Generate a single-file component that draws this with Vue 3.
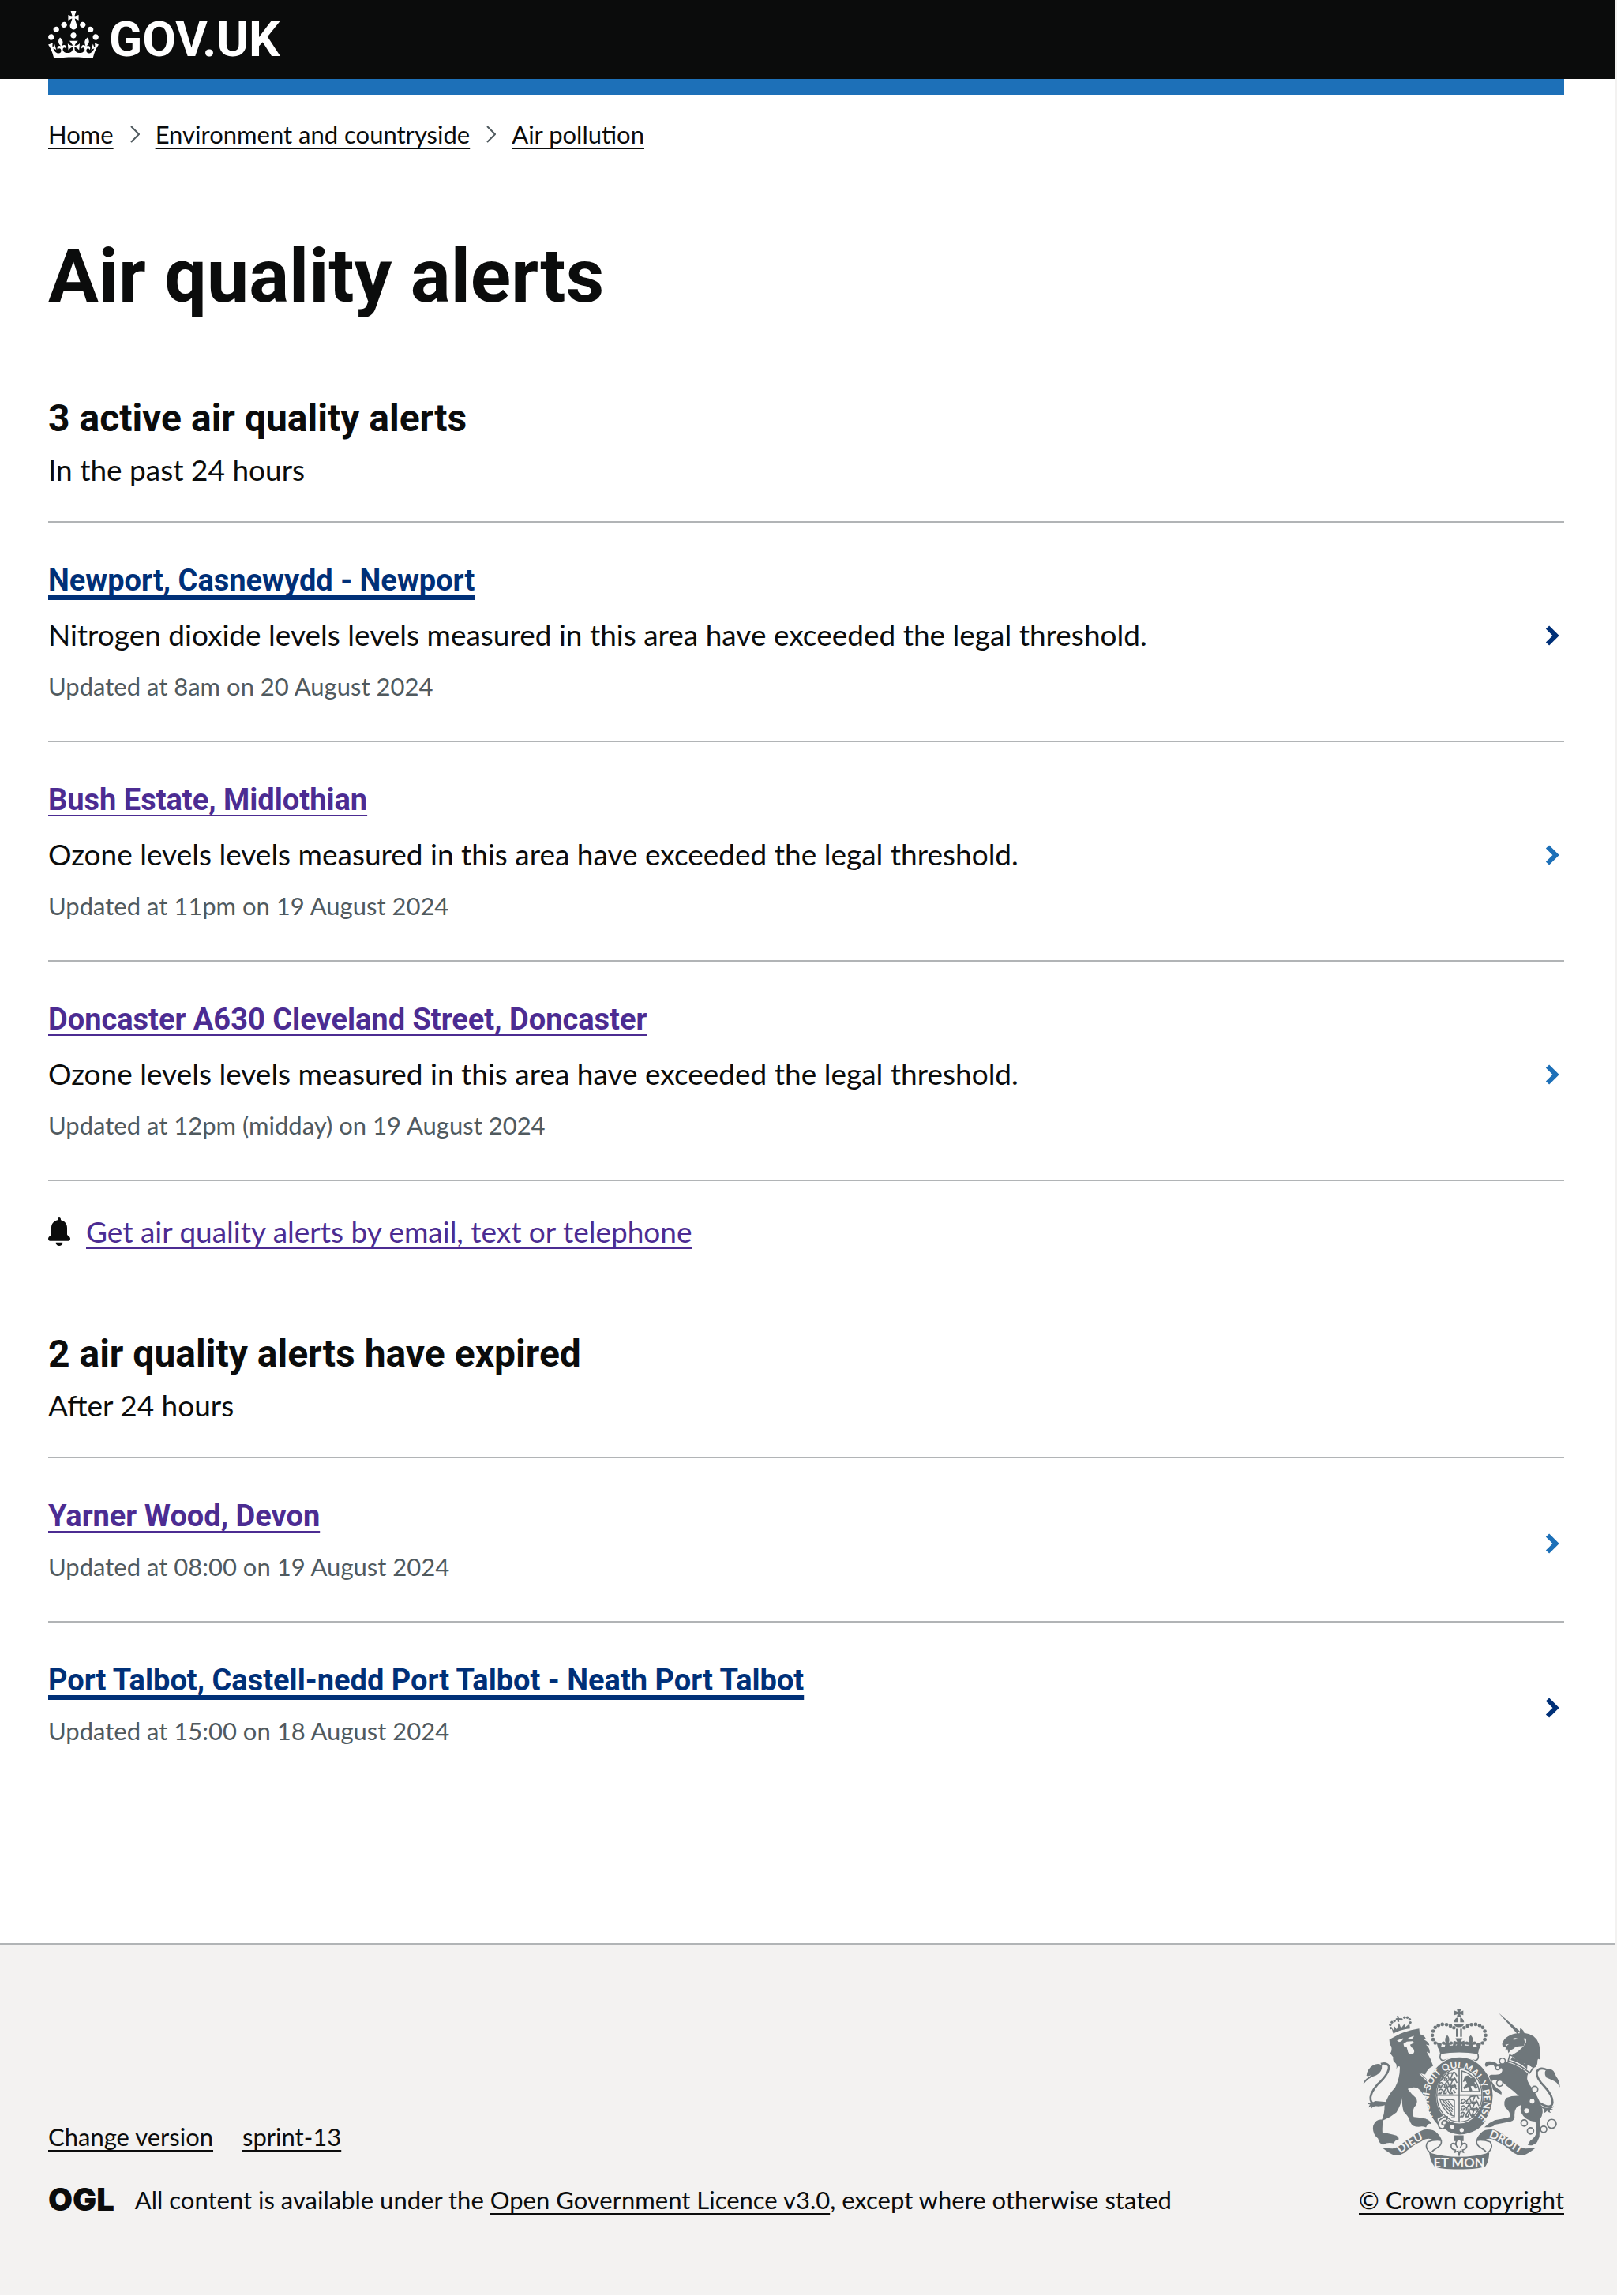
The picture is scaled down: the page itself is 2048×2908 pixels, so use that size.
<script setup>
const breadcrumbs = ['Home', 'Environment and countryside', 'Air pollution']

const groups = [
  {
    id: 'active',
    heading: '3 active air quality alerts',
    caption: 'In the past 24 hours',
    alerts: [
      {
        place: 'Newport, Casnewydd - Newport',
        detail: 'Nitrogen dioxide levels levels measured in this area have exceeded the legal threshold.',
        updated: 'Updated at 8am on 20 August 2024',
        highlighted: true,
      },
      {
        place: 'Bush Estate, Midlothian',
        detail: 'Ozone levels levels measured in this area have exceeded the legal threshold.',
        updated: 'Updated at 11pm on 19 August 2024',
      },
      {
        place: 'Doncaster A630 Cleveland Street, Doncaster',
        detail: 'Ozone levels levels measured in this area have exceeded the legal threshold.',
        updated: 'Updated at 12pm (midday) on 19 August 2024',
      },
    ],
    signup: 'Get air quality alerts by email, text or telephone',
  },
  {
    id: 'expired',
    heading: '2 air quality alerts have expired',
    caption: 'After 24 hours',
    alerts: [
      { place: 'Yarner Wood, Devon', updated: 'Updated at 08:00 on 19 August 2024' },
      {
        place: 'Port Talbot, Castell-nedd Port Talbot - Neath Port Talbot',
        updated: 'Updated at 15:00 on 18 August 2024',
        highlighted: true,
      },
    ],
  },
]

// Left half of the crown's pearls; the right half mirrors them.
const pearls = [[353, 203], [345, 190], [342, 174], [345, 158], [353, 144], [365, 136], [380, 132], [396, 133], [411, 138], [424, 145]]
const rings = [[609, 272, 11], [591, 297, 8], [599, 356, 12], [732, 380, 12], [692, 508, 12], [716, 538, 12], [766, 532, 12], [797, 511, 17]]
const lionCrownPearls = [[184, 146], [182, 134], [188, 124], [198, 119], [224, 113], [236, 106], [247, 106], [256, 113], [258, 125]]
const passantRows = [
  [368, 330], [368, 355], [366, 380], [452, 418], [452, 443], [450, 468],
]
</script>

<template>
  <div class="page">
    <header class="header">
      <div class="container">
        <a class="brand" href="#" aria-label="GOV.UK">
          <svg class="brand-crown" viewBox="0 0 32 30" fill="currentColor" aria-hidden="true">
            <path d="M22.6 10.4c-1 .4-2-.1-2.4-1-.4-.9.1-2 1-2.4.9-.4 2 .1 2.4 1s-.1 2-1 2.4m-5.9 6.7c-.9.4-2-.1-2.4-1-.4-.9.1-2 1-2.4.9-.4 2 .1 2.4 1s-.1 2-1 2.4m10.8-3.7c-1 .4-2-.1-2.4-1-.4-.9.1-2 1-2.4.9-.4 2 .1 2.4 1s0 2-1 2.4m3.3 4.8c-1 .4-2-.1-2.4-1-.4-.9.1-2 1-2.4.9-.4 2 .1 2.4 1s-.1 2-1 2.4M17 4.7l2.3 1.2V2.5l-2.3.7-.2-.2.9-3h-3.4l.9 3-.2.2c-.1.1-2.3-.7-2.3-.7v3.4L15 4.7c.1.1.1.2.2.2l-1.3 4c-.1.2-.1.4-.1.6 0 1.1.8 2 1.9 2.2h.7c1-.2 1.9-1.1 1.9-2.1 0-.2 0-.4-.1-.6l-1.3-4c-.1-.2 0-.2.1-.3m-7.6 5.7c.9.4 2-.1 2.4-1 .4-.9-.1-2-1-2.4-.9-.4-2 .1-2.4 1s0 2 1 2.4m-5 3c.9.4 2-.1 2.4-1 .4-.9-.1-2-1-2.4-.9-.4-2 .1-2.4 1s.1 2 1 2.4m-3.2 4.8c.9.4 2-.1 2.4-1 .4-.9-.1-2-1-2.4-.9-.4-2 .1-2.4 1s0 2 1 2.4m14.8 11c4.4 0 8.6.3 12.3.8 1.1-4.5 2.4-7 3.7-8.8l-2.5-.9c.2 1.3.3 1.9 0 2.7-.4-.4-.8-1.1-1.1-2.3l-1.2 4c.7-.5 1.3-.8 2-.9-1.1 2.5-2.6 3.1-3.5 3-1.1-.2-1.7-1.2-1.5-2.1.3-1.2 1.5-1.5 2.1-.1 1.1-2.3-.8-3-2-2.3 1.9-1.9 2.1-3.5.6-5.6-2.1 1.6-2.1 3.2-1.2 5.5-1.2-1.4-3.2-.6-2.5 1.6.9-1.4 2.1-.5 1.9.8-.2 1.1-1.7 2.1-3.5 1.9-2.7-.2-2.9-2.1-2.9-3.6.7-.1 1.9.5 2.9 1.9l.4-4.3c-1.1 1.1-2.1 1.4-3.2 1.4.4-1.2 2.1-3 2.1-3h-5.4s1.7 1.9 2.1 3c-1.1 0-2.1-.2-3.2-1.4l.4 4.3c1-1.4 2.2-2 2.9-1.9-.1 1.5-.2 3.4-2.9 3.6-1.9.2-3.4-.8-3.5-1.9-.2-1.3 1-2.2 1.9-.8.7-2.3-1.2-3-2.5-1.6.9-2.2.9-3.9-1.2-5.5-1.5 2-1.3 3.7.6 5.6-1.2-.7-3.1 0-2 2.3.6-1.4 1.8-1.1 2.1.1.2.9-.3 1.9-1.5 2.1-.9.2-2.4-.5-3.5-3 .6 0 1.2.3 2 .9l-1.2-4c-.3 1.1-.7 1.9-1.1 2.3-.3-.8-.2-1.4 0-2.7l-2.9.9C1.3 23 2.6 25.5 3.7 30c3.7-.5 7.9-.8 12.3-.8" />
          </svg>
          <span class="brand-name">GOV.UK</span>
        </a>
      </div>
    </header>

    <div class="container content">
      <div class="service-bar"></div>

      <nav aria-label="Breadcrumb">
        <ol class="breadcrumbs">
          <li v-for="(crumb, i) in breadcrumbs" :key="crumb">
            <svg v-if="i > 0" class="crumb-arrow" viewBox="0 0 12 22" aria-hidden="true">
              <path d="M1 1l10 10L1 21" />
            </svg>
            <a href="#">{{ crumb }}</a>
          </li>
        </ol>
      </nav>

      <main>
        <h1>Air quality alerts</h1>

        <section v-for="group in groups" :key="group.id" :aria-labelledby="group.id">
          <h2 :id="group.id">{{ group.heading }}</h2>
          <p class="caption">{{ group.caption }}</p>

          <ul class="alerts">
            <li v-for="alert in group.alerts" :key="alert.place" :class="{ highlighted: alert.highlighted }">
              <div class="alert-text">
                <h3><a href="#">{{ alert.place }}</a></h3>
                <p v-if="alert.detail" class="detail">{{ alert.detail }}</p>
                <p class="updated">{{ alert.updated }}</p>
              </div>
              <svg class="alert-arrow" viewBox="0 0 18 28" aria-hidden="true">
                <path d="M3 3.500L13.500 14L3 24.500" />
              </svg>
            </li>
          </ul>

          <p v-if="group.signup" class="signup">
            <svg class="bell" viewBox="33 45 84 108" fill="currentColor" aria-hidden="true">
              <path d="M75 45c4 0 6 3 6 7v3c15 3 24 14 24 30v24c0 6 12 8 12 17 0 5-3 8-7 8H40c-4 0-7-3-7-8 0-9 12-11 12-17V85c0-16 9-27 24-30v-3c0-4 2-7 6-7z" />
              <path d="M62 140h26c-1 8-6 13-13 13s-12-5-13-13z" />
            </svg>
            <a href="#">{{ group.signup }}</a>
          </p>
        </section>
      </main>
    </div>

    <footer class="footer">
      <div class="container footer-inner">
        <div class="footer-meta">
          <ul class="footer-links">
            <li><a href="#">Change version</a></li>
            <li><a href="#">sprint-13</a></li>
          </ul>
          <div class="licence">
            <span class="ogl">OGL</span>
            <p>All content is available under the <a href="#">Open Government Licence v3.0</a>, except where otherwise stated</p>
          </div>
        </div>

        <a class="copyright" href="#">
          <svg class="crest" viewBox="77 70 752 615" aria-hidden="true">
            <defs>
              <path id="garter-text" d="M352 496A104 121 0 1 1 525 478L500 505" />
              <path id="scroll-left" d="M221 625Q275 580 326 563" />
              <path id="scroll-right" d="M556 562Q610 582 676 626" />
            </defs>

            <!-- crown -->
            <path class="ink" d="M435 72h17l-4 12 12-4v17l-12-4 4 12h-17l3-12-12 4V80l12 4zM424 124q3-17 15-18v18zM448 106q12 2 15 18h-15zM424 129h39q-4 14-20 14t-19-14zM432 149h7v31h-7zM448 149h7v31h-7z" />
            <g v-for="side in 2" :key="side" :transform="side === 2 ? 'matrix(-1 0 0 1 887 0)' : undefined">
              <circle v-for="p in pearls" :key="p.join()" class="ink" :cx="p[0]" :cy="p[1]" r="7" />
              <path class="ink" d="M399 173q12 13 5 29 10-9 16-1 2 9-8 9h-5l4 14h-23l3-14h-4q-11 0-9-9 6-8 15 1-7-16 6-29z" />
              <path class="ink" d="M358 199l20 7-4 17-10 1zM422 198l9 7v18l-12 2z" />
              <path class="ink" d="M152 603l38 2q16-1 40-21 50-40 80-51 36-3 50 13 16 16 17 28-20-5-33-1-17-12-44 5-30 12-65 44-20 13-40 8-15-5-43-27z" />
              <path class="line" d="M376 574q-26-4-51 6-12 16 0 32 8 10 14 15M376 574q3 18-17 29-14 8-19 16" />
            </g>
            <path class="ink" d="M430 185h27l-7 14 14-5v18l-13-4 7 16h-29l7-16-13 4v-18l14 5zM366 220q78-18 155 0l-5 25q-72-12-144 0z" />
            <path class="line" d="M373 246q-6 22 10 24 60-18 122 0 16-2 11-24" />

            <!-- lion -->
            <circle v-for="p in lionCrownPearls" :key="p.join()" class="ink" :cx="p[0]" :cy="p[1]" r="5" />
            <path class="ink" d="M206 100l7 1 2 7 7 1v6l-7 1 1 7-7-1-1-6-6-1 1-6 6-1zM186 144l8 10 4-14 8 11 9-24 8 20 12-16 4 12 16-13 2 18q-35 3-64 19z" />
            <path class="ink" d="M178 190l22-12q36-22 92-30l2 22q16 2 24 18l-8 2q18 8 21 22l-14-3q18 15 15 33l-12-6q15 24 25 54-24 12-30 33l-18-4q34 30 50 56l6 35q-2 22-13 15l-4-11-6 13-7-16-7 6q2-12-9-17-7-16-21-25-18-6-38 3 16 22 32 35 10 18-8 37-8 20-1 35 30 3 47 7 18 8 20 20-13-5-20 13-13-6-28-2-24 0-32-18-8-26-26-41-8-34-4-54-6 30-23 58-24 20-50 30-5 22-3 47 33 3 53 11 13 9 7 17-12-2-17 13-24-6-41 5-14-3-19-24-24-20-18-50 12-26 33-22 10-22 10-52 10-40 40-70 20-40 18-80-8-5-13 9 3-19-5-24-10-5-7-20l-11-15q8-15 3-28l-5-6z" />
            <path class="paper" d="M207 193l24-8q-3 13-16 14zM249 184l23-8q-3 12-15 13zM232 206l13-8 21-2 7 6-16 8 6 10q10 4 10 16-2 10-12 10-12-2-13-14l-4-14-10-2z" />
            <path class="paper-line" d="M294 320q30 28 54 56" />
            <path class="line tail" d="M165 435q-50 15-58-14-5-25 26-60 48-44 43-71-10-14-30-7" />
            <path class="ink" d="M78 362q4-20 20-27l12-10q-10 6-19 3 2-26 25-40 20-10 34 0 2 26-22 38-30 8-50 36zM93 430q18 4 32-6l42 4q-16 14-42 15-13 4-18 13-1-7 4-13-9 1-12 7 1-7 6-12-7 0-12-8z" />

            <!-- unicorn -->
            <path class="ink" d="M594 88l81 70-10 10zM608 207q3-18 22-29 20-13 44-12l3-20q14 8 15 19 42 5 56 40 8 30 3 61-9-8-9 14-2 16-14 18l-14-8q-36-16-54-22l-15-18q26-14 46-36-22 0-36 7-4 6-15 9l-8 12-4-16-8 6 2-12-12-3z" />
            <path class="paper" d="M646 188q12-6 20-2-8 8-20 2zM620 210l14-3-10 8zM690 186q8 14 0 28 14-12 8-28z" />
            <path class="line" d="M637 249q44 14 90 47l-14 21q-40-34-82-46z" />
            <path class="ink" d="M640 268l8-14 6 11 8-8 4 14 8-9 5 15 10-9 4 15 12-7-2 26q-30-26-63-34z" />
            <path class="ink" d="M625 275q50 14 82 45-10 16 5 42 34 46 43 78 16 26-3 55l-2 66-9 20q-20 18-36 10l10-16q24-15 23-35l-3-38q-20 0-36-11-26-20-20-51-24 4-24 38 3 20-15 24l-60 12q-6 12-40 10 20-19 40-27 36-6 58-12 2-20-18-35-10-25 5-38 20-8 47-7-22-20-42-35-20-14-25-26-26 0-37 4 10 20 24 30 18 7 13 22l-20-10q-22-12-30-40-4-20 10-26 26 1 36-3 12-12 5-22-26 4-30-10-14-4-30 5-8-10 3-20 26-4 42 10 16 0 34-10z" />
            <path class="line tail" d="M748 430q48 30 52 0 0-28-30-60-34-34-30-57 10-20 38-8" />
            <path class="ink" d="M828 372q-12-22-28-27l-24-10q-12-20 2-32 22-4 30 14l5 12q14 18 15 43zM745 430q18 20 32 20 14 0 28-6-4 8-10 8 2 5 10 6-8 4-16 1 0 6 5 11-10-1-15-9-4 6-11 9 1-8-2-16-14-6-21-24z" />
            <circle v-for="r in rings" :key="r.join()" class="ring" :cx="r[0]" :cy="r[1]" :r="r[2]" />
            <circle class="paper" cx="722" cy="425" r="9" />
            <circle class="paper" cx="701" cy="461" r="9" />

            <!-- garter and shield -->
            <ellipse class="garter-edge" cx="445" cy="403" rx="129" ry="149" />
            <ellipse class="garter" cx="445" cy="403" rx="108" ry="126" />
            <text class="motto"><textPath href="#garter-text" startOffset="12">HONI SOIT QUI MAL Y PENSE</textPath></text>
            <ellipse class="shield" cx="445" cy="402" rx="86" ry="102" />
            <path class="line" d="M444 300v204M358 402h174" />
            <path
              v-for="row in passantRows"
              :key="row.join()"
              class="passant"
              :transform="`translate(${row[0]} ${row[1]})`"
              d="M0 6q8-12 14-3t12-3 10 5 12-7 16-6l4 8M4 9l-4 7h8l4-8M22 6l-2 10h8l2-9M44 6l-2 10h10l-4-8M56 2l8 12M30-3l6-8 14-2"
            />
            <path class="line" d="M454 310q52 12 68 78h-68z" />
            <path class="ink" d="M466 330l12-4 10 10 14-2 8 12-8 8 12 18-6 8-10-14-10 2 6 16-8 6-8-20-14 10-4-8 14-14-4-10-12 4z" />
            <path class="line thin" d="M370 416q14 8 28 4t28 2v60q-36-6-56-66zM382 422l36 44M392 423l28 34M402 423l20 24M384 436l34 40M414 488h14" />

            <!-- buckle -->
            <path class="paper" d="M362 492l22-12 26 26-12 40-34-16z" />
            <path class="line" d="M379 490q-18 8-14 26 4 16 18 13 10-4 7-14-13 3-12-7 2-12 14-9 10-7 7-15-12-2-20 6z" />
            <path class="ink" d="M396 498q48 32 88 24 40-6 62-24-30 50-100 54-38-4-60-24z" />
            <circle class="paper" cx="418" cy="522" r="8" />
            <circle class="paper" cx="454" cy="535" r="8" />

            <!-- pendant and scrolls -->
            <path class="ink" d="M426 555h35v22h-35z" />
            <path class="fleur" d="M443 565q-20 18-5 38-10-26-24-14-4 20 16 22l-2 8 12-4 4 14 4-14 12 4-3-8q20-4 15-22-14-12-24 14 16-20-5-38z" />
            <path class="ink" d="M330 621q113 32 229 0-2 34-14 51-24 12-102 12t-94-12q-14-17-19-51z" />
            <text class="scroll" x="444" y="677" text-anchor="middle">ET MON</text>
            <text class="scroll small"><textPath href="#scroll-left">DIEU</textPath></text>
            <text class="scroll small"><textPath href="#scroll-right">DROIT</textPath></text>
          </svg>
          <span>© Crown copyright</span>
        </a>
      </div>
    </footer>
  </div>
</template>

<style>
body {
  margin: 0;
  background: #ffffff;
}
</style>

<style scoped>
.page {
  font-family: Lato, "Liberation Sans", sans-serif;
  font-size: 37px;
  line-height: 50px;
  color: #0b0c0c;
  border-right: 3px solid #f3f2f1;
}

h1, h2, h3, p, ul, ol {
  margin: 0;
  padding: 0;
}

h1, h2, h3, .brand-name {
  font-family: Roboto, "Liberation Sans", sans-serif;
  font-weight: 700;
}

ul, ol {
  list-style: none;
}

a {
  color: inherit;
  text-decoration: underline;
  text-decoration-thickness: 2px;
  text-decoration-skip-ink: none;
  text-underline-offset: 5px;
}

.container {
  margin: 0 64px 0 61px;
}

.header {
  background: #0b0c0c;
}

.brand {
  display: inline-flex;
  align-items: center;
  gap: 13px;
  height: 100px;
  color: #ffffff;
  text-decoration: none;
}

.brand-crown {
  width: 64px;
  height: 60px;
  margin-bottom: 12px;
}

.brand-name {
  font-size: 62px;
  line-height: 100px;
}

.service-bar {
  height: 20px;
  background: #1d70b8;
}

.content {
  padding-bottom: 200px;
}

.breadcrumbs {
  display: flex;
  margin-top: 30px;
  font-size: 31px;
  line-height: 40px;
}

.breadcrumbs li {
  display: flex;
  align-items: center;
}

.crumb-arrow {
  width: 12px;
  height: 22px;
  margin: 0 20px 0 21px;
  fill: none;
  stroke: #505a5f;
  stroke-width: 2;
}

h1 {
  margin-top: 110px;
  font-size: 95px;
  line-height: 100px;
}

section {
  margin-top: 100px;
}

h2 {
  font-size: 48px;
  line-height: 60px;
}

.caption {
  margin-top: 10px;
}

.alerts {
  margin-top: 40px;
  border-top: 2px solid #b1b4b6;
}

.alerts li {
  display: flex;
  align-items: center;
  justify-content: space-between;
  padding: 48px 6px 49px 0;
}

.alerts li + li {
  border-top: 2px solid #b1b4b6;
}

section:first-of-type .alerts {
  border-bottom: 2px solid #b1b4b6;
}

h3 {
  margin-bottom: 19px;
  font-size: 38px;
  line-height: 50px;
}

h3 a,
.signup a {
  color: #4c2c92;
  text-underline-offset: 6px;
}

.highlighted h3 a {
  color: #003078;
  text-decoration-thickness: 6px;
}

.detail {
  margin-bottom: 20px;
}

.updated {
  font-size: 31px;
  line-height: 40px;
  color: #505a5f;
}

.alert-arrow {
  width: 18px;
  height: 28px;
  margin-top: 10px;
  fill: none;
  stroke: #1d70b8;
  stroke-width: 6;
}

.highlighted .alert-arrow {
  stroke: #003078;
}

.signup {
  display: flex;
  align-items: center;
  gap: 20px;
  margin-top: 39px;
}

.bell {
  width: 28px;
  height: 36px;
}

.footer {
  padding: 80px 0 101px;
  background: #f3f2f1;
  border-top: 2px solid #b1b4b6;
  font-size: 31px;
  line-height: 40px;
}

.footer-inner {
  display: flex;
  align-items: flex-end;
  justify-content: space-between;
}

.footer-links {
  display: flex;
  gap: 37px;
  margin-bottom: 40px;
}

.licence {
  display: flex;
  align-items: center;
  gap: 26px;
}

.ogl {
  font-family: Inter, sans-serif;
  font-size: 40px;
  font-weight: 900;
}

.copyright {
  display: flex;
  flex-direction: column;
  align-items: center;
  gap: 18px;
}

.crest {
  width: 250px;
  height: 205px;
}

.ink {
  fill: #6f777b;
}

.paper {
  fill: #f3f2f1;
}

.line {
  fill: none;
  stroke: #6f777b;
  stroke-width: 5;
}

.line.tail {
  stroke-width: 8;
}

.line.thin {
  stroke-width: 4;
}

.paper-line {
  fill: none;
  stroke: #f3f2f1;
  stroke-width: 4;
}

.ring {
  fill: #f3f2f1;
  stroke: #6f777b;
  stroke-width: 5;
}

.garter-edge {
  fill: #f3f2f1;
}

.garter {
  fill: #f3f2f1;
  stroke: #6f777b;
  stroke-width: 38;
}

.shield {
  fill: #f3f2f1;
  stroke: #6f777b;
  stroke-width: 4;
}

.passant {
  fill: none;
  stroke: #6f777b;
  stroke-width: 5;
}

.fleur {
  fill: #f3f2f1;
  stroke: #6f777b;
  stroke-width: 5;
}

.motto {
  font-size: 36px;
  font-weight: 700;
  fill: #f3f2f1;
}

.scroll {
  font-size: 50px;
  font-weight: 700;
  fill: #f3f2f1;
}

.scroll.small {
  font-size: 44px;
}
</style>
